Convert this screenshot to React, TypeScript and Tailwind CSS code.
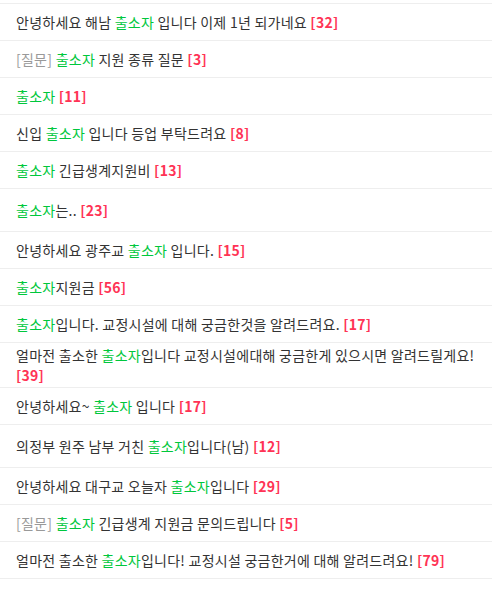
import React from 'react';

type Post = {
  tag?: string;
  parts: { text: string; hl?: boolean }[];
  count: number;
  tall?: boolean;
};

const posts: Post[] = [
  { parts: [{ text: '안녕하세요 해남 ' }, { text: '출소자', hl: true }, { text: ' 입니다 이제 1년 되가네요' }], count: 32 },
  { tag: '[질문]', parts: [{ text: ' ' }, { text: '출소자', hl: true }, { text: ' 지원 종류 질문' }], count: 3 },
  { parts: [{ text: '출소자', hl: true }], count: 11 },
  { parts: [{ text: '신입 ' }, { text: '출소자', hl: true }, { text: ' 입니다 등업 부탁드려요' }], count: 8 },
  { parts: [{ text: '출소자', hl: true }, { text: ' 긴급생계지원비' }], count: 13 },
  { parts: [{ text: '출소자', hl: true }, { text: '는..' }], count: 23, tall: true },
  { parts: [{ text: '안녕하세요 광주교 ' }, { text: '출소자', hl: true }, { text: ' 입니다.' }], count: 15 },
  { parts: [{ text: '출소자', hl: true }, { text: '지원금' }], count: 56 },
  { parts: [{ text: '출소자', hl: true }, { text: '입니다. 교정시설에 대해 궁금한것을 알려드려요.' }], count: 17 },
  { parts: [{ text: '얼마전 출소한 ' }, { text: '출소자', hl: true }, { text: '입니다 교정시설에대해 궁금한게 있으시면 알려드릴게요!' }], count: 39 },
  { parts: [{ text: '안녕하세요~ ' }, { text: '출소자', hl: true }, { text: ' 입니다' }], count: 17 },
  { parts: [{ text: '의정부 원주 남부 거친 ' }, { text: '출소자', hl: true }, { text: '입니다(남)' }], count: 12, tall: true },
  { parts: [{ text: '안녕하세요 대구교 오늘자 ' }, { text: '출소자', hl: true }, { text: '입니다' }], count: 29 },
  { tag: '[질문]', parts: [{ text: ' ' }, { text: '출소자', hl: true }, { text: ' 긴급생계 지원금 문의드립니다' }], count: 5 },
  { parts: [{ text: '얼마전 출소한 ' }, { text: '출소자', hl: true }, { text: '입니다! 교정시설 궁금한거에 대해 알려드려요!' }], count: 79 },
];

export default function App() {
  return (
    <div
      className="w-[492px] h-[593px] bg-white pt-[3px] overflow-hidden"
      style={{ fontFamily: '"Noto Sans CJK KR", "Noto Sans", sans-serif' }}
    >
      <ul className="border-b border-[#eeeeee]">
        {posts.map((p, i) => (
          <li
            key={i}
            className={`border-t border-[#eeeeee] px-4 flex items-center text-[14px] leading-5 tracking-[0.25px] text-[#333333] ${
              p.tall ? 'h-[43px]' : 'min-h-[37px] py-[2px]'
            }`}
          >
            <p className="break-all">
              {p.tag && <span className="text-[#999999]">{p.tag}</span>}
              {p.parts.map((part, j) => (
                <span key={j} className={part.hl ? 'text-[#00c73c]' : ''}>
                  {part.text}
                </span>
              ))}{' '}
              <span className="font-bold text-[#ff3355]">[{p.count}]</span>
            </p>
          </li>
        ))}
      </ul>
    </div>
  );
}
